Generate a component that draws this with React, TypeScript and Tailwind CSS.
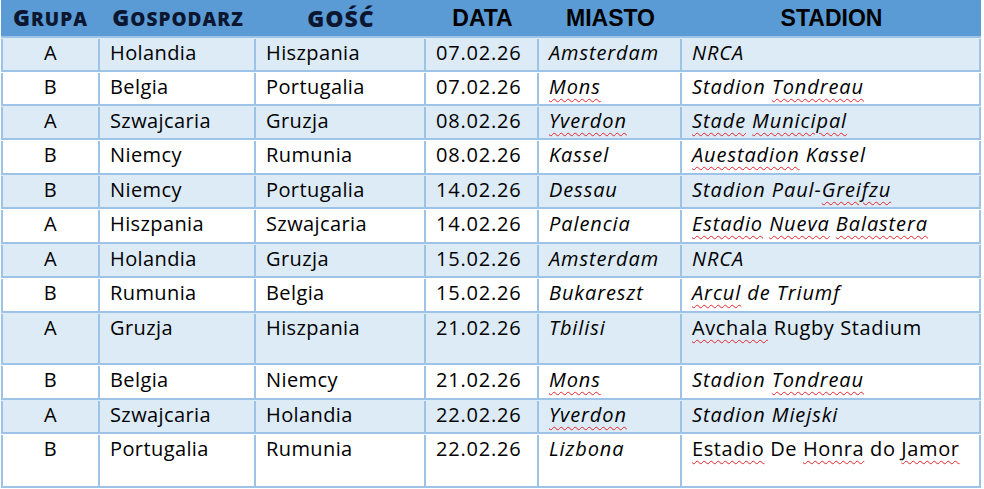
const cols = 'grid grid-cols-[99px_156px_170px_113px_143px_299px]';

type Match = {
  g: string;
  home: string;
  away: string;
  date: string;
  city: string;
  stadium: string;
  plain?: boolean;
  h: string;
};

// words between ~ get the red spell-check squiggle
const matches: Match[] = [
  { g: 'A', home: 'Holandia', away: 'Hiszpania', date: '07.02.26', city: 'Amsterdam', stadium: 'NRCA', h: 'h-[34px]' },
  { g: 'B', home: 'Belgia', away: 'Portugalia', date: '07.02.26', city: '~Mons~', stadium: 'Stadion ~Tondreau~', h: 'h-[34px]' },
  { g: 'A', home: 'Szwajcaria', away: 'Gruzja', date: '08.02.26', city: '~Yverdon~', stadium: '~Stade~ ~Municipal~', h: 'h-[34px]' },
  { g: 'B', home: 'Niemcy', away: 'Rumunia', date: '08.02.26', city: 'Kassel', stadium: '~Auestadion~ Kassel', h: 'h-[35px]' },
  { g: 'B', home: 'Niemcy', away: 'Portugalia', date: '14.02.26', city: 'Dessau', stadium: 'Stadion Paul-~Greifzu~', h: 'h-[34px]' },
  { g: 'A', home: 'Hiszpania', away: 'Szwajcaria', date: '14.02.26', city: 'Palencia', stadium: '~Estadio~ ~Nueva~ ~Balastera~', h: 'h-[35px]' },
  { g: 'A', home: 'Holandia', away: 'Gruzja', date: '15.02.26', city: 'Amsterdam', stadium: 'NRCA', h: 'h-[34px]' },
  { g: 'B', home: 'Rumunia', away: 'Belgia', date: '15.02.26', city: 'Bukareszt', stadium: '~Arcul~ de Triumf', h: 'h-[35px]' },
  { g: 'A', home: 'Gruzja', away: 'Hiszpania', date: '21.02.26', city: 'Tbilisi', stadium: '~Avchala~ Rugby Stadium', plain: true, h: 'h-[52px]' },
  { g: 'B', home: 'Belgia', away: 'Niemcy', date: '21.02.26', city: '~Mons~', stadium: 'Stadion ~Tondreau~', h: 'h-[35px]' },
  { g: 'A', home: 'Szwajcaria', away: 'Holandia', date: '22.02.26', city: '~Yverdon~', stadium: 'Stadion Miejski', h: 'h-[34px]' },
  { g: 'B', home: 'Portugalia', away: 'Rumunia', date: '22.02.26', city: 'Lizbona', stadium: '~Estadio~ De ~Honra~ do ~Jamor~', plain: true, h: 'h-[54px]' },
];

function Spell({ text }: { text: string }) {
  return (
    <>
      {text.split('~').map((part, i) =>
        i % 2 ? (
          <span
            key={i}
            className="underline decoration-wavy decoration-[#e3262b] decoration-1 underline-offset-[4px]"
          >
            {part}
          </span>
        ) : (
          <span key={i}>{part}</span>
        ),
      )}
    </>
  );
}

function SmallCaps({ first, rest }: { first: string; rest: string }) {
  return (
    <span className="font-['Open_Sans',sans-serif] font-extrabold tracking-[1px] text-[#0b1730]">
      <span className="text-[23px]">{first}</span>
      <span className="text-[19px]">{rest}</span>
    </span>
  );
}

const cell = 'border-r-2 border-[#9dc3e6] pl-[10px] whitespace-nowrap';

export default function App() {
  return (
    <div className="min-h-screen bg-white">
      <div className="ml-px w-[980px] font-['Open_Sans',sans-serif] text-[20px] leading-[28px] tracking-[0.4px] text-black">
        <div className={`${cols} h-[38px] border-b-2 border-[#9dc3e6] bg-[#5b9bd5]`}>
          <div className="flex items-center justify-center">
            <SmallCaps first="G" rest="RUPA" />
          </div>
          <div className="flex items-center justify-center">
            <SmallCaps first="G" rest="OSPODARZ" />
          </div>
          <div className="flex items-center justify-center text-[23px] font-extrabold tracking-[1px] text-[#0b1730]">
            GOŚĆ
          </div>
          <div className="flex items-center justify-center font-['Liberation_Sans',Arial,sans-serif] text-[23px] font-bold tracking-normal">
            DATA
          </div>
          <div className="flex items-center justify-center font-['Liberation_Sans',Arial,sans-serif] text-[23px] font-bold tracking-normal">
            MIASTO
          </div>
          <div className="flex items-center justify-center font-['Liberation_Sans',Arial,sans-serif] text-[23px] font-bold tracking-normal">
            STADION
          </div>
        </div>

        {matches.map((m, i) => (
          <div
            key={i}
            className={`${cols} ${m.h} border-b-2 border-[#9dc3e6] pt-px ${i % 2 ? 'bg-white' : 'bg-[#ddebf7]'}`}
          >
            <div className="border-x-2 border-[#9dc3e6] text-center">{m.g}</div>
            <div className={cell}>{m.home}</div>
            <div className={cell}>{m.away}</div>
            <div className={`${cell} tracking-[0.8px]`}>{m.date}</div>
            <div className={`${cell} italic tracking-[0.9px]`}>
              <Spell text={m.city} />
            </div>
            <div className={`${cell} ${m.plain ? 'tracking-[0.6px]' : 'italic tracking-[0.9px]'}`}>
              <Spell text={m.stadium} />
            </div>
          </div>
        ))}
      </div>
    </div>
  );
}
